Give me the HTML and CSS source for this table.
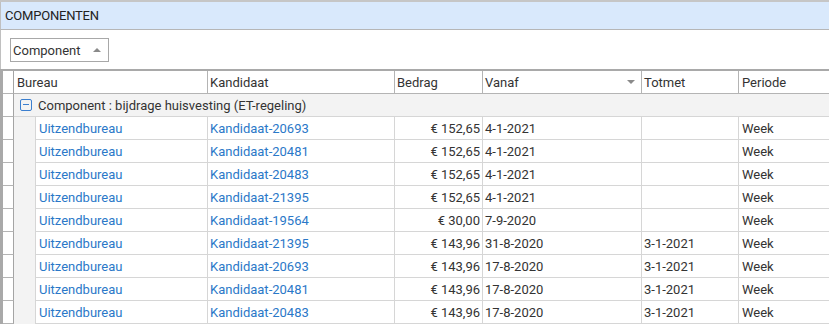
FILE: index.html
```html
<!DOCTYPE html>
<html lang="en">
<head>
    <meta charset="UTF-8">
    <title>Componenten</title>
    <link rel="stylesheet" href="styles.css">
</head>
<body>
    <div class="panel">
        <div class="panel-title">COMPONENTEN</div>

        <div class="group-bar">
            <div class="group-chip">Component <span class="arrow-up"></span></div>
        </div>

        <div class="grid">
            <div class="row head">
                <div class="ind"></div>
                <div class="cell wide">Bureau</div>
                <div class="cell c-kand">Kandidaat</div>
                <div class="cell c-bedrag">Bedrag</div>
                <div class="cell c-vanaf">Vanaf <span class="arrow-down"></span></div>
                <div class="cell c-totmet">Totmet</div>
                <div class="cell c-periode">Periode</div>
            </div>

            <div class="row group">
                <div class="ind"></div>
                <div class="group-cell">
                    <span class="collapse-box"></span>
                    Component : bijdrage huisvesting (ET-regeling)
                </div>
            </div>

            <div class="row data">
                <div class="ind"></div><div class="indent"></div>
                <div class="cell c-bureau link">Uitzendbureau</div>
                <div class="cell c-kand link">Kandidaat-20693</div>
                <div class="cell c-bedrag num">€ 152,65</div>
                <div class="cell c-vanaf">4-1-2021</div>
                <div class="cell c-totmet"></div>
                <div class="cell c-periode">Week</div>
            </div>
            <div class="row data">
                <div class="ind"></div><div class="indent"></div>
                <div class="cell c-bureau link">Uitzendbureau</div>
                <div class="cell c-kand link">Kandidaat-20481</div>
                <div class="cell c-bedrag num">€ 152,65</div>
                <div class="cell c-vanaf">4-1-2021</div>
                <div class="cell c-totmet"></div>
                <div class="cell c-periode">Week</div>
            </div>
            <div class="row data">
                <div class="ind"></div><div class="indent"></div>
                <div class="cell c-bureau link">Uitzendbureau</div>
                <div class="cell c-kand link">Kandidaat-20483</div>
                <div class="cell c-bedrag num">€ 152,65</div>
                <div class="cell c-vanaf">4-1-2021</div>
                <div class="cell c-totmet"></div>
                <div class="cell c-periode">Week</div>
            </div>
            <div class="row data">
                <div class="ind"></div><div class="indent"></div>
                <div class="cell c-bureau link">Uitzendbureau</div>
                <div class="cell c-kand link">Kandidaat-21395</div>
                <div class="cell c-bedrag num">€ 152,65</div>
                <div class="cell c-vanaf">4-1-2021</div>
                <div class="cell c-totmet"></div>
                <div class="cell c-periode">Week</div>
            </div>
            <div class="row data">
                <div class="ind"></div><div class="indent"></div>
                <div class="cell c-bureau link">Uitzendbureau</div>
                <div class="cell c-kand link">Kandidaat-19564</div>
                <div class="cell c-bedrag num">€ 30,00</div>
                <div class="cell c-vanaf">7-9-2020</div>
                <div class="cell c-totmet"></div>
                <div class="cell c-periode">Week</div>
            </div>
            <div class="row data">
                <div class="ind"></div><div class="indent"></div>
                <div class="cell c-bureau link">Uitzendbureau</div>
                <div class="cell c-kand link">Kandidaat-21395</div>
                <div class="cell c-bedrag num">€ 143,96</div>
                <div class="cell c-vanaf">31-8-2020</div>
                <div class="cell c-totmet">3-1-2021</div>
                <div class="cell c-periode">Week</div>
            </div>
            <div class="row data">
                <div class="ind"></div><div class="indent"></div>
                <div class="cell c-bureau link">Uitzendbureau</div>
                <div class="cell c-kand link">Kandidaat-20693</div>
                <div class="cell c-bedrag num">€ 143,96</div>
                <div class="cell c-vanaf">17-8-2020</div>
                <div class="cell c-totmet">3-1-2021</div>
                <div class="cell c-periode">Week</div>
            </div>
            <div class="row data">
                <div class="ind"></div><div class="indent"></div>
                <div class="cell c-bureau link">Uitzendbureau</div>
                <div class="cell c-kand link">Kandidaat-20481</div>
                <div class="cell c-bedrag num">€ 143,96</div>
                <div class="cell c-vanaf">17-8-2020</div>
                <div class="cell c-totmet">3-1-2021</div>
                <div class="cell c-periode">Week</div>
            </div>
            <div class="row data">
                <div class="ind"></div><div class="indent"></div>
                <div class="cell c-bureau link">Uitzendbureau</div>
                <div class="cell c-kand link">Kandidaat-20483</div>
                <div class="cell c-bedrag num">€ 143,96</div>
                <div class="cell c-vanaf">17-8-2020</div>
                <div class="cell c-totmet">3-1-2021</div>
                <div class="cell c-periode">Week</div>
            </div>
        </div>
    </div>
</body>
</html>
```

FILE: styles.css
```css
body {
    margin: 0;
    font-family: Roboto, "Liberation Sans", sans-serif;
    font-size: 13px;
    color: #333;
    background: #fff;
    overflow: hidden;
}

/* Panel header */
.panel {
    border-top: 2px solid #c6c6c6;
}

.panel-title {
    height: 27px;
    line-height: 28px;
    padding-left: 4px;
    background: #d9e9fc;
    border-left: 1px solid #c0c0c0;
    border-bottom: 1px solid #b6b6b6;
    color: #222;
    letter-spacing: -0.2px;
}

/* Group-by area */
.group-bar {
    height: 39px;
    border-left: 1px solid #c0c0c0;
    padding: 8px 0 0 9px;
    box-sizing: border-box;
}

.group-chip {
    display: inline-flex;
    align-items: center;
    width: 99px;
    height: 24px;
    box-sizing: border-box;
    border: 1px solid #a8a8a8;
    padding-left: 2px;
    color: #333;
}

.arrow-up {
    margin-left: 12px;
    margin-top: -1px;
    width: 0;
    height: 0;
    border-left: 4px solid transparent;
    border-right: 4px solid transparent;
    border-bottom: 4px solid #8a8a8a;
}

.arrow-down {
    margin-left: auto;
    margin-right: 6px;
    width: 0;
    height: 0;
    border-left: 4px solid transparent;
    border-right: 4px solid transparent;
    border-top: 4px solid #8a8a8a;
}

/* Grid */
.grid {
    border-top: 2px solid #a9a9a9;
    border-left: 3px solid #a9a9a9;
}

.row {
    display: flex;
    height: 23px;
}

.ind {
    flex: 0 0 11px;
    box-sizing: border-box;
    border-right: 1px solid #a4a4a4;
    border-bottom: 1px solid #b4b4b4;
    background: #fff;
}

.cell {
    display: flex;
    align-items: center;
    box-sizing: border-box;
    padding-left: 2px;
    border-right: 1px solid #d6d6d6;
    border-bottom: 1px solid #d6d6d6;
    white-space: nowrap;
    overflow: hidden;
}

.head .cell {
    border-right-color: #b4b4b4;
    border-bottom-color: #b4b4b4;
}

.wide { flex: 0 0 194px; }
.head .wide { padding-left: 3px; }
.indent {
    flex: 0 0 21px;
    background: #f3f3f3;
}
.c-bureau { flex: 0 0 173px; border-left: 1px solid #d6d6d6; }
.c-kand { flex: 0 0 187px; }
.c-bedrag { flex: 0 0 88px; }
.c-vanaf { flex: 0 0 159px; }
.c-totmet { flex: 0 0 97px; }
.c-periode { flex: 1 1 auto; border-right: none; }

.data .c-bureau { padding-left: 3px; }
.data .c-periode { padding-left: 3px; }
.head .c-periode { padding-left: 3px; }

.num {
    justify-content: flex-end;
    padding-right: 2px;
}

.link {
    color: #2a78c8;
}

/* Group row */
.group-cell {
    flex: 1 1 auto;
    display: flex;
    align-items: center;
    background: #f3f3f3;
    border-bottom: 1px solid #d6d6d6;
    padding-left: 6px;
}

.collapse-box {
    position: relative;
    width: 10px;
    height: 10px;
    border: 1px solid #3b7fcf;
    border-radius: 2px;
    margin-right: 6px;
}

.collapse-box::after {
    content: "";
    position: absolute;
    left: 2px;
    right: 2px;
    top: 4px;
    height: 1px;
    background: #3b7fcf;
}
```
